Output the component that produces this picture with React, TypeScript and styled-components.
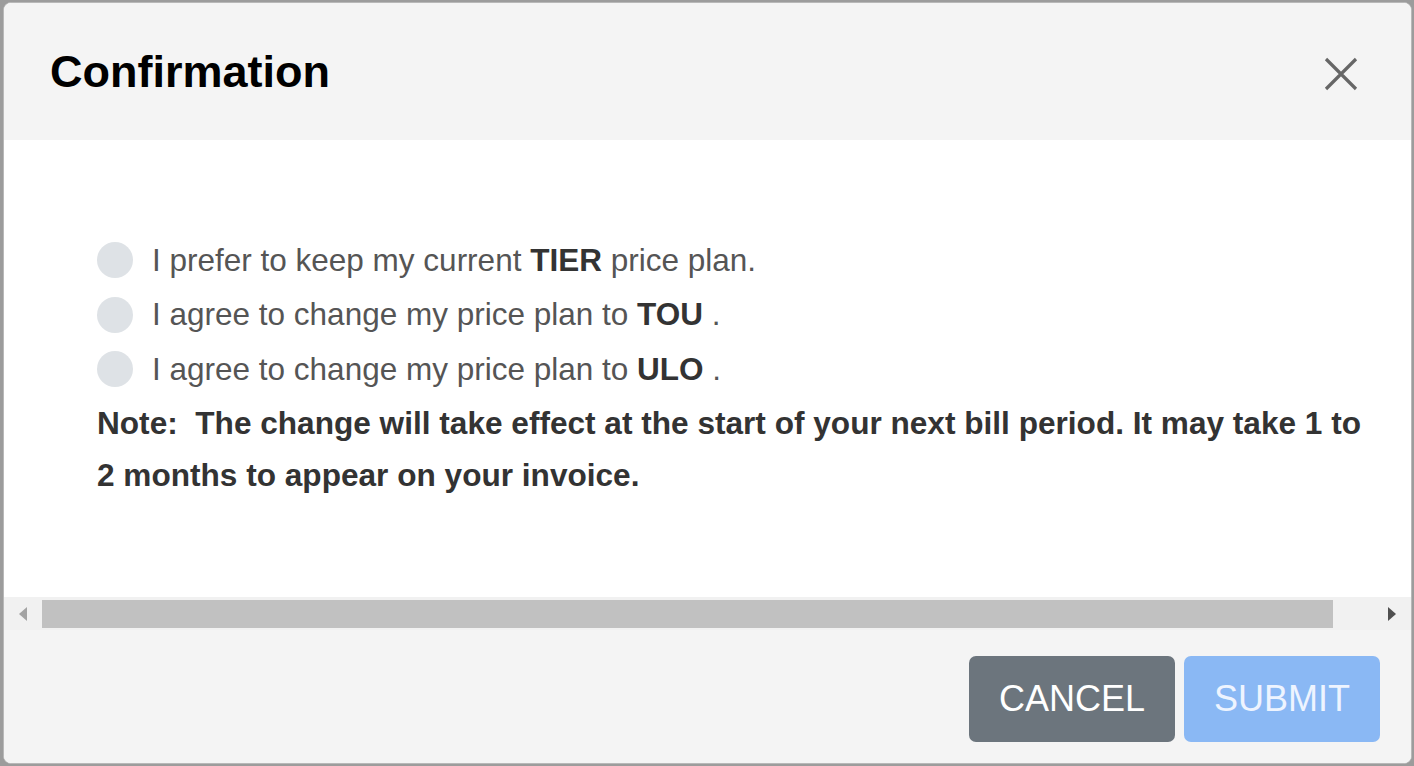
import * as React from "react";
import styled, { createGlobalStyle } from "styled-components";

const GlobalStyle = createGlobalStyle`
  html, body {
    margin: 0;
    padding: 0;
    height: 100%;
    background: #9c9c9c;
    font-family: "Liberation Sans", Arial, sans-serif;
  }
  #root {
    height: 100%;
  }
`;

const Page = styled.div`
  height: 100%;
  box-sizing: border-box;
  padding: 2px 2px 2px 3px;
  display: flex;
`;

const Dialog = styled.div`
  flex: 1;
  display: flex;
  flex-direction: column;
  background: #fff;
  border: 1px solid #b8b8b8;
  border-radius: 8px;
  overflow: hidden;
`;

const Header = styled.div`
  height: 137px;
  flex: none;
  background: #f4f4f4;
  display: flex;
  align-items: center;
  justify-content: space-between;
  padding: 0 50px 0 46px;
`;

const Title = styled.h2`
  margin: 0;
  font-size: 45px;
  font-weight: bold;
  color: #000;
`;

const CloseButton = styled.button`
  border: 0;
  background: none;
  padding: 0;
  width: 40px;
  height: 40px;
  display: flex;
  align-items: center;
  justify-content: center;
  cursor: pointer;
  position: relative;
  top: 2px;
`;

const Body = styled.div`
  flex: 1;
  background: #fff;
  padding: 93px 46px 0 93px;
`;

const Option = styled.label`
  display: flex;
  align-items: center;
  height: 54.5px;
  gap: 19px;
  font-size: 31.5px;
  color: #555;
  cursor: pointer;

  b {
    color: #333;
  }
`;

const Radio = styled.span`
  width: 36px;
  height: 36px;
  flex: none;
  border-radius: 50%;
  background: #dee2e6;
`;

const Note = styled.p`
  margin: 0;
  font-size: 31.6px;
  font-weight: bold;
  line-height: 52px;
  color: #333;
`;

const ScrollBar = styled.div`
  height: 33px;
  flex: none;
  background: #f1f1f1;
  display: flex;
  align-items: center;
`;

const ScrollArrow = styled.div<{ $width: number }>`
  width: ${(p) => p.$width}px;
  height: 100%;
  flex: none;
  display: flex;
  align-items: center;
  justify-content: center;
`;

const ScrollTrack = styled.div`
  flex: 1;
  height: 28px;
  display: flex;
`;

const ScrollThumb = styled.div`
  height: 100%;
  background: #c1c1c1;
`;

const Footer = styled.div`
  height: 133px;
  flex: none;
  background: #f4f4f4;
  display: flex;
  justify-content: flex-end;
  align-items: flex-start;
  gap: 9px;
  padding: 26px 31px 0 0;
  box-sizing: border-box;
`;

const Button = styled.button<{ $variant: "secondary" | "primary" }>`
  height: 86px;
  padding: 0 30px;
  border: 0;
  border-radius: 7px;
  font-family: "Liberation Sans", Arial, sans-serif;
  font-size: 36px;
  background: ${(p) => (p.$variant === "secondary" ? "#6c757d" : "#8ab8f4")};
  color: ${(p) => (p.$variant === "secondary" ? "#fff" : "#eef4ff")};
  cursor: ${(p) => (p.$variant === "secondary" ? "pointer" : "default")};
`;

const options = [
  { text: "I prefer to keep my current ", plan: "TIER", tail: " price plan." },
  { text: "I agree to change my price plan to ", plan: "TOU", tail: " ." },
  { text: "I agree to change my price plan to ", plan: "ULO", tail: " ." },
];

export default function App() {
  return (
    <>
      <GlobalStyle />
      <Page>
        <Dialog>
          <Header>
            <Title>Confirmation</Title>
            <CloseButton aria-label="Close">
              <svg width="34" height="34" viewBox="0 0 34 34">
                <path d="M2 2 L32 32 M32 2 L2 32" stroke="#666" strokeWidth="3.2" />
              </svg>
            </CloseButton>
          </Header>
          <Body>
            {options.map((o) => (
              <Option key={o.plan}>
                <Radio />
                <span>
                  {o.text}
                  <b>{o.plan}</b>
                  {o.tail}
                </span>
              </Option>
            ))}
            <Note>
              Note:&nbsp; The change will take effect at the start of your next bill period. It may take 1 to 2
              months to appear on your invoice.
            </Note>
          </Body>
          <ScrollBar>
            <ScrollArrow $width={38}>
              <svg width="10" height="14" viewBox="0 0 10 14">
                <path d="M9 0 L9 14 L1 7 Z" fill="#a3a3a3" />
              </svg>
            </ScrollArrow>
            <ScrollTrack>
              <ScrollThumb style={{ width: "97%" }} />
            </ScrollTrack>
            <ScrollArrow $width={38}>
              <svg width="10" height="14" viewBox="0 0 10 14">
                <path d="M1 0 L1 14 L9 7 Z" fill="#505050" />
              </svg>
            </ScrollArrow>
          </ScrollBar>
          <Footer>
            <Button $variant="secondary">CANCEL</Button>
            <Button $variant="primary" disabled>
              SUBMIT
            </Button>
          </Footer>
        </Dialog>
      </Page>
    </>
  );
}
